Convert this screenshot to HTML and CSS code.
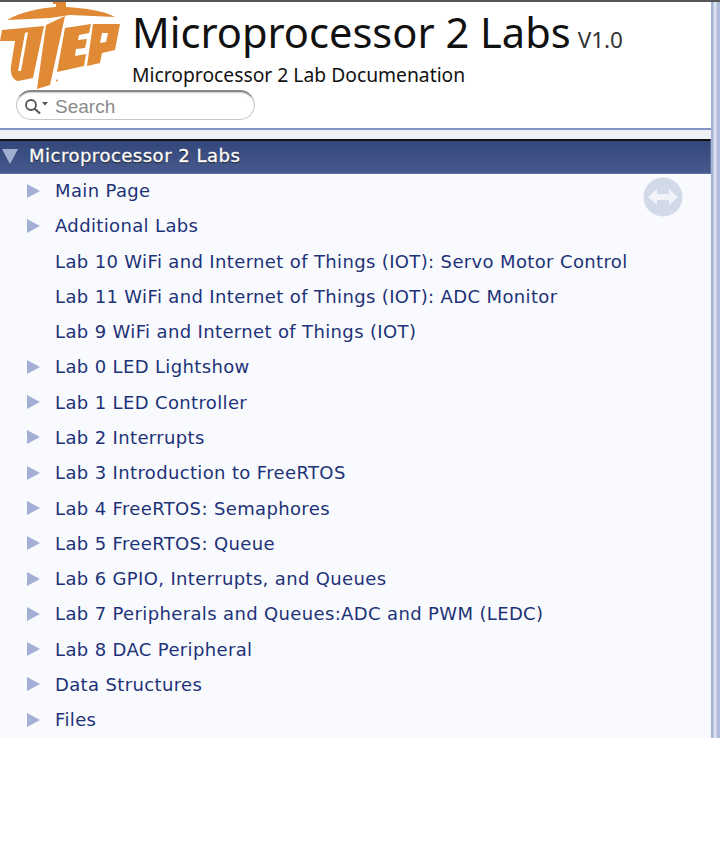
FILE: index.html
```html
<!DOCTYPE html>
<html lang="en">
<head>
  <meta charset="UTF-8" />
  <meta name="viewport" content="width=device-width, initial-scale=1.0" />
  <title>Microprocessor 2 Labs</title>
  <link rel="stylesheet" href="styles.css">
</head>
<body>
  <div class="page">
    <div class="content">
      <div class="header">
        <svg class="logo" width="122" height="92" viewBox="0 0 122 92">
          <g fill="#e08a35">
            <path d="M7 20C20 12 40 8 56 7V4H53V2H66V7C85 8 105 11 115 17L70 15 50 18Z"/>
            <path d="M2 30 44 26 33 78 18 81C12 80 10 72 11 66L15 41H0Z"/>
            <path d="M46 25 65 16 50 85 37 89Z"/>
            <path d="M65 28 91 24 89 33 79 35 78 40 87 39 85 48 76 49 75 56 86 54 84 66 57 72Z"/>
            <path fill-rule="evenodd" d="M93 24H120L115 50 102 53 100 63 87 66ZM102 33H108L106 42 100 43Z"/>
            <circle cx="57" cy="80.5" r="1"/>
          </g>
          <path fill="#fff" d="M25 33 18 71H21L28 32Z"/>
        </svg>
        <div class="titles">
          <div class="project"><span>Microprocessor 2 Labs</span><span class="version">V1.0</span></div>
          <div class="brief">Microprocessor 2 Lab Documenation</div>
        </div>
        <div class="search">
          <svg class="search-icon" width="26" height="18" viewBox="0 0 26 18">
            <circle cx="7" cy="7" r="5" fill="none" stroke="#555" stroke-width="1.8"/>
            <path d="M10.5 10.5 16 15.5" stroke="#555" stroke-width="2.2" fill="none"/>
            <path d="M18 4h6l-3 3.5z" fill="#555"/>
          </svg>
          <span class="search-text">Search</span>
        </div>
      </div>
      <div class="strip"></div>
      <div class="nav-title">
        <span class="arrow-down"></span>
        <span>Microprocessor 2 Labs</span>
      </div>
      <div class="nav">
        <svg class="sync" width="40" height="40" viewBox="0 0 40 40">
          <circle cx="20" cy="20" r="19.5" fill="#d2d9e9"/>
          <path d="M5 20l9-8v5h12v-5l9 8-9 8v-5H14v5z" fill="#f1f3f9"/>
        </svg>
        <div class="item"><span class="arrow"></span>Main Page</div>
        <div class="item"><span class="arrow"></span>Additional Labs</div>
        <div class="item"><span class="no-arrow"></span>Lab 10 WiFi and Internet of Things (IOT): Servo Motor Control</div>
        <div class="item"><span class="no-arrow"></span>Lab 11 WiFi and Internet of Things (IOT): ADC Monitor</div>
        <div class="item"><span class="no-arrow"></span>Lab 9 WiFi and Internet of Things (IOT)</div>
        <div class="item"><span class="arrow"></span>Lab 0 LED Lightshow</div>
        <div class="item"><span class="arrow"></span>Lab 1 LED Controller</div>
        <div class="item"><span class="arrow"></span>Lab 2 Interrupts</div>
        <div class="item"><span class="arrow"></span>Lab 3 Introduction to FreeRTOS</div>
        <div class="item"><span class="arrow"></span>Lab 4 FreeRTOS: Semaphores</div>
        <div class="item"><span class="arrow"></span>Lab 5 FreeRTOS: Queue</div>
        <div class="item"><span class="arrow"></span>Lab 6 GPIO, Interrupts, and Queues</div>
        <div class="item"><span class="arrow"></span>Lab 7 Peripherals and Queues:ADC and PWM (LEDC)</div>
        <div class="item"><span class="arrow"></span>Lab 8 DAC Peripheral</div>
        <div class="item"><span class="arrow"></span>Data Structures</div>
        <div class="item"><span class="arrow"></span>Files</div>
      </div>
    </div>
    <div class="splitbar"></div>
  </div>
</body>
</html>
```

FILE: styles.css
```css
body {
  margin: 0;
  background: #fff;
  font-family: "DejaVu Sans", sans-serif;
}
.page {
  display: flex;
  box-sizing: border-box;
  height: 738px;
  border-top: 2px solid #555;
}
.content {
  flex: 1;
  display: flex;
  flex-direction: column;
  min-width: 0;
}
.splitbar {
  width: 9px;
  background: linear-gradient(to right, #a3b0d4 0, #a3b0d4 2px, #dde2f0 3px, #dde2f0 5px, #b0bcdc 6px, #b0bcdc 9px);
}
.header {
  height: 126px;
  flex-shrink: 0;
  position: relative;
  background: #fff;
  border-bottom: 2px solid #8494c6;
}
.logo {
  position: absolute;
  left: 0;
  top: -2px;
}
.titles {
  padding: 8px 0 0 132px;
}
.project {
  font-family: "Noto Sans", sans-serif;
  font-size: 41.6px;
  line-height: 44px;
  color: #111;
  white-space: nowrap;
}
.version {
  margin-left: 7px;
  font-size: 22.5px;
  color: #333;
}
.brief {
  font-family: "Noto Sans", sans-serif;
  font-size: 19.3px;
  line-height: 26px;
  color: #111;
}
.search {
  position: absolute;
  left: 16px;
  top: 88px;
  box-sizing: border-box;
  width: 239px;
  height: 30px;
  display: flex;
  align-items: center;
  padding-top: 2px;
  background: #fff;
  border: 1px solid #c8c8c8;
  border-top: 2px solid #888;
  border-radius: 15px;
  box-shadow: inset 0 1px 1px rgba(0,0,0,0.2);
}
.search-icon {
  margin-left: 7px;
}
.search-text {
  margin-left: 5px;
  font-family: "Liberation Sans", sans-serif;
  font-size: 19px;
  color: #8a8a8a;
}
.strip {
  height: 9px;
  flex-shrink: 0;
  background: #f0f1f7;
}
.nav-title {
  height: 35px;
  flex-shrink: 0;
  display: flex;
  align-items: center;
  gap: 11px;
  padding-left: 2px;
  padding-bottom: 3px;
  box-sizing: border-box;
  background: linear-gradient(to bottom, #34477a, #47598c);
  border-top: 2px solid #111;
  border-bottom: 1px solid #5e72a8;
  border-right: 1px solid #5e72a8;
  color: #fff;
  font-size: 18px;
  letter-spacing: 0.5px;
  -webkit-text-stroke: 0.3px #fff;
  text-shadow: 0 1px 1px #111;
}
.arrow-down {
  width: 0;
  height: 0;
  margin-top: 2px;
  border-left: 8px solid transparent;
  border-right: 8px solid transparent;
  border-top: 15px solid #a3afd2;
}
.nav {
  flex: 1;
  position: relative;
  background: #f9fafd;
}
.sync {
  position: absolute;
  right: 28px;
  top: 3px;
}
.item {
  display: flex;
  align-items: center;
  box-sizing: border-box;
  height: 35.27px;
  padding-left: 27px;
  padding-bottom: 2px;
  font-size: 18px;
  letter-spacing: 0.36px;
  color: #1d3278;
  white-space: nowrap;
}
.arrow {
  width: 0;
  height: 0;
  margin-right: 15px;
  border-top: 7px solid transparent;
  border-bottom: 7px solid transparent;
  border-left: 13px solid #a3afd5;
}
.no-arrow {
  width: 13px;
  margin-right: 15px;
}
```
